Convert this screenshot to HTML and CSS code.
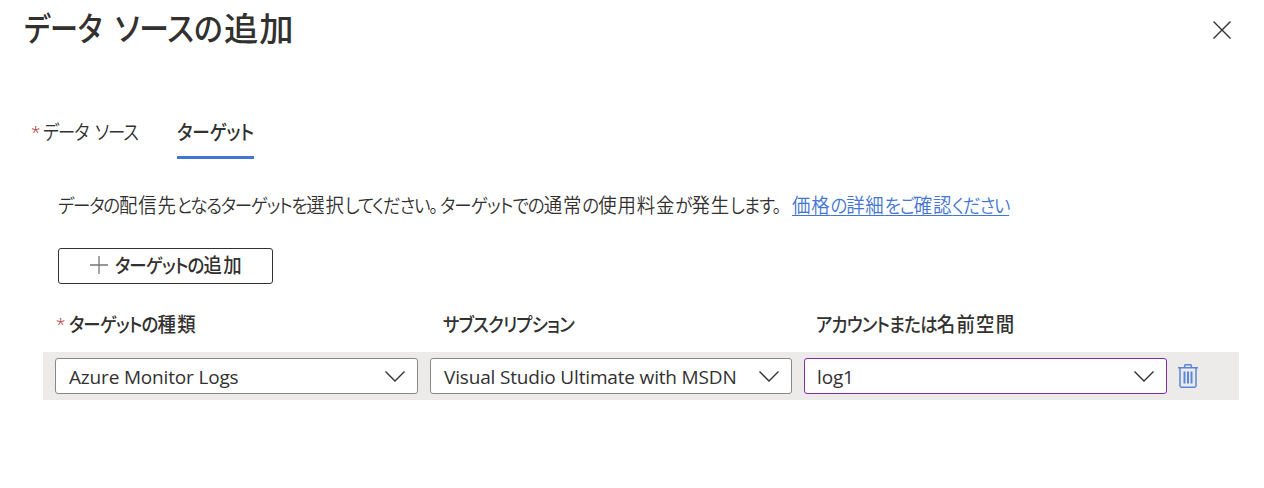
FILE: index.html
```html
<!DOCTYPE html>
<html lang="ja">
<head>
<meta charset="utf-8">
<title>データ ソースの追加</title>
<link rel="stylesheet" href="styles.css">
</head>
<body>
<main class="panel">
  <header class="header">
    <h1 class="title"><span class="t1">データ</span> <span class="t2">ソースの</span><span class="t3">追加</span></h1>
    <button class="close" aria-label="閉じる"><svg width="20" height="20" viewBox="0 0 20 20"><path d="M1.500 1.500l17 17M18.500 1.500l-17 17"/></svg></button>
  </header>
  <nav class="tabs">
    <a class="tab first"><span class="required">*</span><span class="ja">データ ソース</span></a>
    <a class="tab active"><span class="ja">ターゲット</span></a>
  </nav>
  <p class="intro"><span class="ja s1">データの<i>配信先</i>となるターゲットを<i>選択</i>してください。</span><span class="ja s2">ターゲットでの<i>通常</i>の<i>使用料金</i>が<i>発生</i>します。</span><a class="ja link"><i>価格</i>の<i>詳細</i>をご<i>確認</i>ください</a></p>
  <button class="add"><svg width="18" height="18" viewBox="0 0 18 18"><path d="M9 0v18M0 9h18"/></svg><span class="ja">ターゲットの<i>追加</i></span></button>
  <div class="labels">
    <div class="label"><span class="required">*</span><span class="ja">ターゲットの<i>種類</i></span></div>
    <div class="label"><span class="ja">サブスクリプション</span></div>
    <div class="label"><span class="ja">アカウントまたは<i>名前空間</i></span></div>
  </div>
  <div class="row">
    <div class="select w1"><span class="value">Azure Monitor Logs</span><svg width="22" height="12" viewBox="0 0 22 12"><path d="M1.500 1.500l9.500 9.500L20.500 1.500"/></svg></div>
    <div class="select w2"><span class="value">Visual Studio Ultimate with MSDN</span><svg width="22" height="12" viewBox="0 0 22 12"><path d="M1.500 1.500l9.500 9.500L20.500 1.500"/></svg></div>
    <div class="select w3 focus"><span class="value">log1</span><svg width="22" height="12" viewBox="0 0 22 12"><path d="M1.500 1.500l9.500 9.500L20.500 1.500"/></svg></div>
    <svg class="trash" width="20" height="24" viewBox="0 0 20 24"><path d="M0 3.700h20M6.700 3.500V1.800q0-1.100 1.100-1.100h4.400q1.100 0 1.100 1.100v1.700M2 4v17.800q0 1.400 1.400 1.400h13.200q1.400 0 1.400-1.400V4"/><path class="bars" d="M6.500 7.500v12M10 7.500v12M13.500 7.500v12"/></svg>
  </div>
</main>
</body>
</html>
```
FILE: styles.css
```css
* { box-sizing: border-box; }
body {
  margin: 0;
  background: #fff;
  color: #323130;
  font-family: "Noto Sans CJK JP", sans-serif;
  font-size: 19px;
  font-weight: 350;
  font-feature-settings: "palt";
  line-height: 28px;
}
.panel { width: 1264px; height: 488px; overflow: hidden; }
button { padding: 0; background: none; border: 0; color: inherit; font: inherit; font-feature-settings: inherit; }
svg { display: block; flex: none; fill: none; stroke: #323130; }
span, .link { white-space: nowrap; }

/* Condensed kana with full-width kanji */
.ja { display: block; flex: none; letter-spacing: -1.1px; transform: scaleX(.92); transform-origin: left; }
.ja i { font-style: normal; font-size: 20px; letter-spacing: .9px; }

.header { display: flex; justify-content: space-between; height: 60px; padding: 7px 32px 0 24px; }
.title { display: flex; margin: 0; font-size: 33px; line-height: 40px; font-weight: 500; }
.title span { display: block; flex: none; transform-origin: left; }
.t1 { width: 91px; transform: scaleX(.85); }
.t2 { width: 109px; transform: scaleX(.9); }
.t3 { letter-spacing: 1px; transform: scaleX(1.04); }
.close { width: 20px; height: 20px; margin-top: 13px; }
.close svg { stroke-width: 1.4; }

.tabs { display: flex; margin: 58px 0 0 31px; height: 41px; }
.tab { display: flex; height: 41px; }
.tab .ja { padding-top: 0; font-size: 20px; }
.first { width: 146px; }
.first .ja { word-spacing: 4px; transform: scaleX(.865); }
.tab .required { width: 12px; }
.required { color: #a4262c; font-family: "Open Sans", sans-serif; font-size: 17px; font-weight: 300; }
.active { width: 77px; border-bottom: 3px solid #4375d3; font-weight: 500; }
.active .ja { letter-spacing: -.2px; transform: scaleX(.885); }

.intro { display: flex; margin: 32px 0 0 58px; height: 28px; }
.s1 { width: 382px; letter-spacing: -1.3px; }
.s2 { width: 352px; letter-spacing: -.9px; }
.link { letter-spacing: -1.3px; color: #4375d3; text-decoration: underline; text-decoration-thickness: 1px; text-underline-offset: 2px; }

.add { display: flex; align-items: center; width: 215px; height: 36px; margin: 29px 0 0 58px; padding: 0 0 2px 31px; gap: 7px; border: 1px solid #323130; border-radius: 3px; font-weight: 500; }
.add svg { stroke: #777; stroke-width: 1.3; }
.add .ja, .labels .ja { letter-spacing: -.9px; }
.add .ja i, .labels .ja i { letter-spacing: 1.3px; }

.labels { display: grid; grid-template-columns: 387px 373px 400px; margin: 26px 0 0 56px; height: 28px; font-weight: 500; }
.label { display: flex; }
.label .required { width: 13px; }

.row { display: flex; align-items: center; width: 1196px; height: 48px; margin: 14px 0 0 43px; padding-left: 12px; background: #ecebe9; }
.select { display: flex; align-items: center; justify-content: space-between; height: 36px; margin-right: 12px; padding: 0 11px 0 13px; border: 1px solid #8a8886; border-radius: 3px; background: #fff; font-family: "Open Sans", sans-serif; font-size: 19px; font-weight: 400; }
.value { padding-top: 1px; letter-spacing: -.17px; }
.w1 { width: 363px; }
.w2 { width: 362px; }
.w3 { width: 363px; margin-right: 11px; padding-left: 12px; }
.focus { border-color: #7e2ea6; }
.select svg { stroke-width: 1.4; }
.trash { stroke: #5a87d8; stroke-width: 1.5; }
.bars { stroke-width: 2; }
```
